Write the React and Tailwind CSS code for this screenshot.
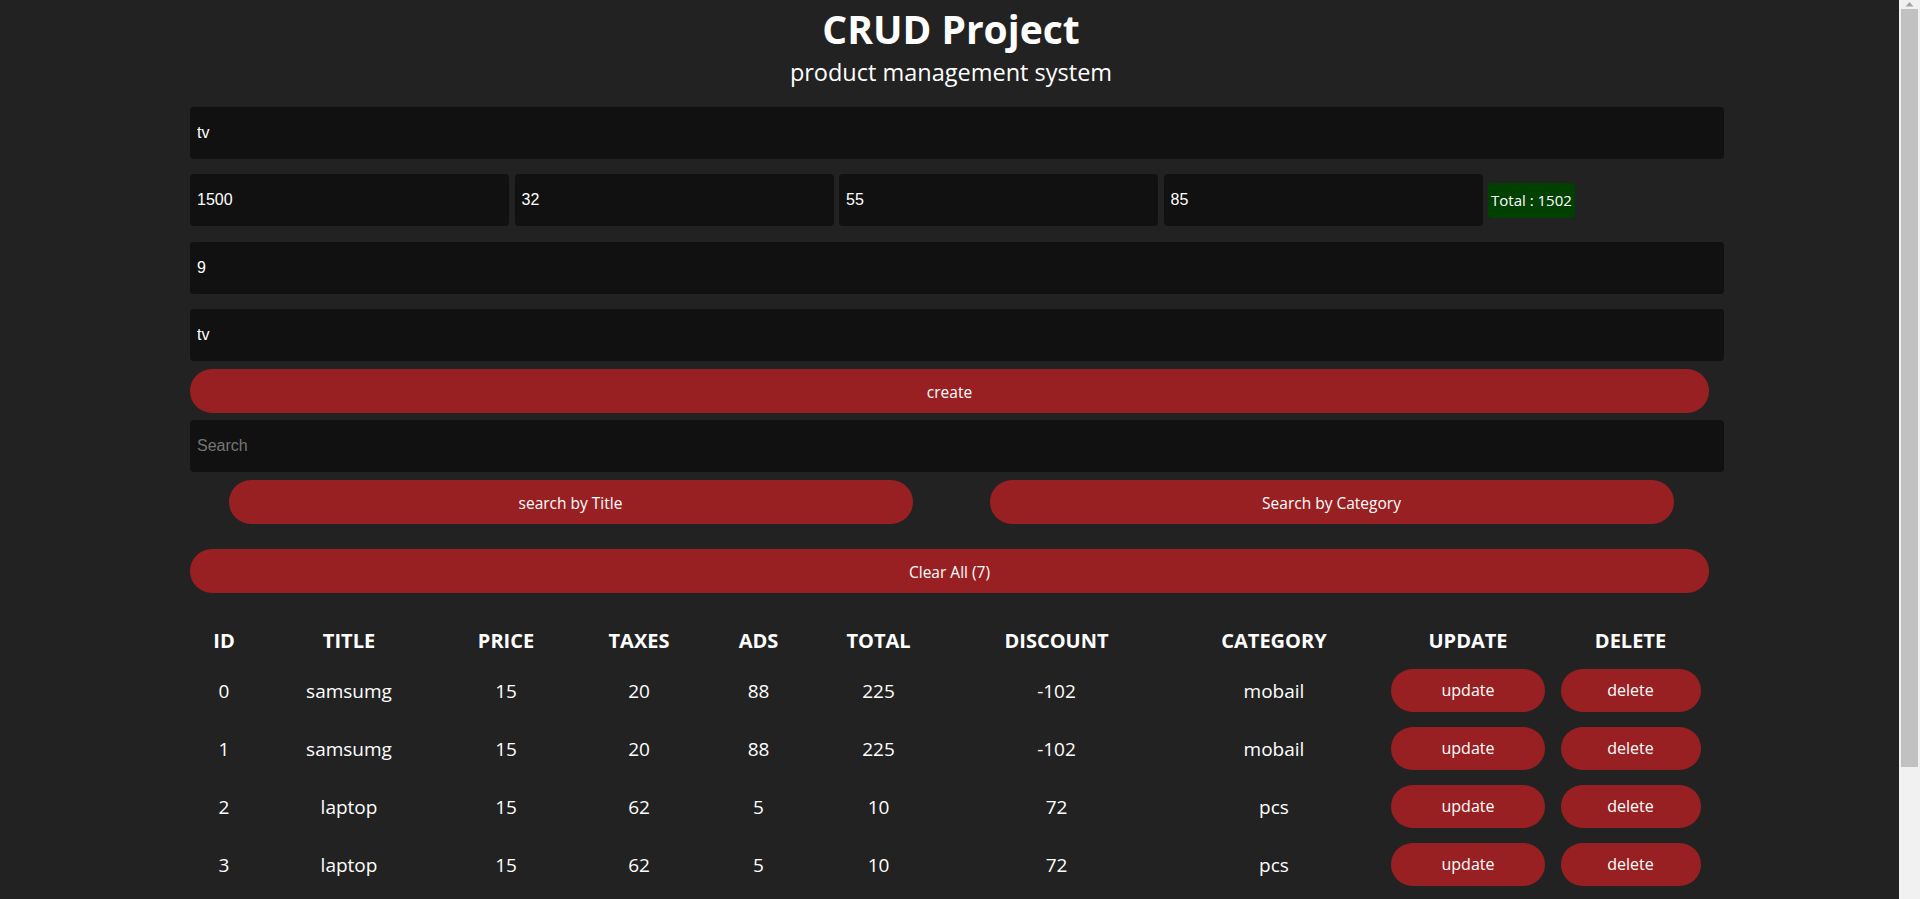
// CRUD product management page: form inputs, search buttons and product table.
import { useMemo } from "react";

const products = [
  { id: 0, title: "samsumg", price: 15, taxes: 20, ads: 88, total: 225, discount: -102, category: "mobail" },
  { id: 1, title: "samsumg", price: 15, taxes: 20, ads: 88, total: 225, discount: -102, category: "mobail" },
  { id: 2, title: "laptop", price: 15, taxes: 62, ads: 5, total: 10, discount: 72, category: "pcs" },
  { id: 3, title: "laptop", price: 15, taxes: 62, ads: 5, total: 10, discount: 72, category: "pcs" },
  { id: 4, title: "tv", price: 1500, taxes: 32, ads: 55, total: 1502, discount: 85, category: "tv" },
  { id: 5, title: "tv", price: 1500, taxes: 32, ads: 55, total: 1502, discount: 85, category: "tv" },
  { id: 6, title: "tv", price: 1500, taxes: 32, ads: 55, total: 1502, discount: 85, category: "tv" },
];

const columns = [
  { key: "id", label: "ID", w: "w-[68px]" },
  { key: "title", label: "TITLE", w: "w-[182px]" },
  { key: "price", label: "PRICE", w: "w-[132px]" },
  { key: "taxes", label: "TAXES", w: "w-[134px]" },
  { key: "ads", label: "ADS", w: "w-[105px]" },
  { key: "total", label: "TOTAL", w: "w-[135px]" },
  { key: "discount", label: "DISCOUNT", w: "w-[221px]" },
  { key: "category", label: "CATEGORY", w: "w-[214px]" },
  { key: "update", label: "UPDATE", w: "w-[174px]" },
  { key: "delete", label: "DELETE", w: "w-[151px]" },
];

function Field({ value, placeholder, className = "" }) {
  return (
    <input
      readOnly
      defaultValue={value}
      placeholder={placeholder}
      className={`h-[52px] rounded-[4px] bg-[#111111] pl-[7px] text-[16px] text-white outline-none placeholder:text-[#757575] font-['Liberation_Sans',Arial,sans-serif] ${className}`}
    />
  );
}

function RedButton({ children, className = "" }) {
  return (
    <button className={`rounded-[22px] bg-[#992022] text-white ${className}`}>
      {children}
    </button>
  );
}

export default function App() {
  const rows = useMemo(() => products, []);

  return (
    <div className="min-h-screen bg-[#222222] text-white font-['Open_Sans',sans-serif]">
      <div className="ml-[190px] w-[1522px] pb-10">
        <h1 className="h-[58px] text-center text-[39px] font-bold leading-[58px]">CRUD Project</h1>
        <p className="mb-[21px] text-center text-[23.5px] leading-[28px]">product management system</p>

        <Field value="tv" className="w-[1534px]" />

        <div className="mt-[15px] flex items-center gap-[5.5px]">
          <Field value="1500" className="w-[319px]" />
          <Field value="32" className="w-[319px]" />
          <Field value="55" className="w-[319px]" />
          <Field value="85" className="w-[319px]" />
          <span className="rounded-[4px] bg-[#004000] px-[3px] text-[15px] leading-[35px]">Total : 1502</span>
        </div>

        <Field value="9" className="mt-[16px] w-[1534px]" />
        <Field value="tv" className="mt-[15px] w-[1534px]" />

        <RedButton className="mt-[8px] h-[44px] w-[1519px] pt-[3px] text-[15.5px]">create</RedButton>

        <Field placeholder="Search" className="mt-[7px] w-[1534px]" />

        <div className="mt-[8px] flex">
          <div className="flex w-1/2 justify-center">
            <RedButton className="h-[44px] w-[684px] pt-[3px] text-[15.5px]">search by Title</RedButton>
          </div>
          <div className="flex w-1/2 justify-center">
            <RedButton className="h-[44px] w-[684px] pt-[3px] text-[15.5px]">Search by Category</RedButton>
          </div>
        </div>

        <RedButton className="mt-[25px] h-[44px] w-[1519px] pt-[3px] text-[15.5px]">Clear All ({rows.length})</RedButton>

        <table className="mt-[27px] table-fixed border-collapse text-center">
          <thead>
            <tr className="h-[42px]">
              {columns.map((c) => (
                <th key={c.key} className={`${c.w} p-0 text-[20px] font-bold`}>
                  {c.label}
                </th>
              ))}
            </tr>
          </thead>
          <tbody>
            {rows.map((p) => (
              <tr key={p.id} className="h-[58px] text-[19px]">
                <td>{p.id}</td>
                <td>{p.title}</td>
                <td>{p.price}</td>
                <td>{p.taxes}</td>
                <td>{p.ads}</td>
                <td>{p.total}</td>
                <td>{p.discount}</td>
                <td>{p.category}</td>
                <td className="pb-[2px]">
                  <RedButton className="h-[43px] w-[154px] text-[16px]">update</RedButton>
                </td>
                <td className="pb-[2px]">
                  <RedButton className="h-[43px] w-[140px] text-[16px]">delete</RedButton>
                </td>
              </tr>
            ))}
          </tbody>
        </table>
      </div>

      {/* browser scrollbar, as it shows in the screenshot */}
      <div className="fixed right-0 top-0 flex h-screen w-[21px] flex-col items-center bg-[#f1f1f1]">
        <svg width="9" height="6" viewBox="0 0 9 6" className="mt-[1px]">
          <path d="M0.5 5.5 L4.5 1 L8.5 5.5 Z" fill="#a3a3a3" />
        </svg>
        <div className="mt-[2px] h-[758px] w-[17px] bg-[#c1c1c1]" />
      </div>
    </div>
  );
}
